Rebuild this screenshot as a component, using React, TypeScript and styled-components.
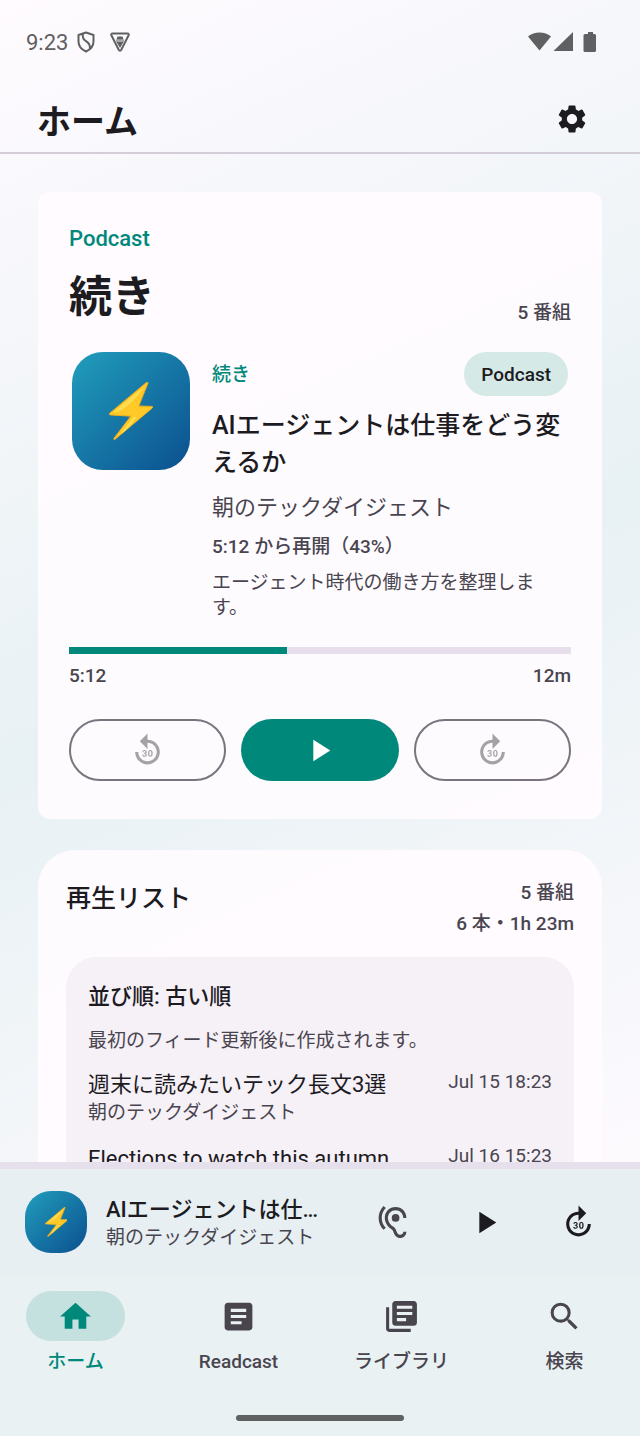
import React from "react";
import styled, { createGlobalStyle, css } from "styled-components";
import {
  MdArticle,
  MdForward30,
  MdHearing,
  MdHome,
  MdLibraryBooks,
  MdPlayArrow,
  MdReplay30,
  MdSearch,
  MdSettings,
} from "react-icons/md";

const color = {
  ink: "#1c1b1f",
  muted: "#49454f",
  system: "#5f6061",
  primary: "#00897b",
  outline: "#79747e",
  track: "#e7e0ec",
  surface: "rgba(255, 251, 255, 0.94)",
  inset: "#f6f0f7",
};

const GlobalStyle = createGlobalStyle`
  *, *::before, *::after { box-sizing: border-box; }
  body {
    margin: 0;
    color: ${color.ink};
    font-family: Roboto, "Noto Sans CJK JP", sans-serif;
  }
  h1, h2, h3, p, ul { margin: 0; padding: 0; }
  ul { list-style: none; }
  button { font: inherit; color: inherit; cursor: pointer; }
`;

/* Type scale */
const labelText = css`
  font-size: 19px;
  line-height: 25px;
  font-weight: 500;
`;
const smallText = css`
  font-size: 19px;
  line-height: 25px;
  font-weight: 400;
`;
const mediumText = css`
  font-size: 22px;
  line-height: 31px;
`;
const titleText = css`
  font-size: 25px;
  line-height: 37px;
  font-weight: 500;
`;

const Screen = styled.div`
  display: flex;
  flex-direction: column;
  height: 100vh;
  background: linear-gradient(156deg, #fffbff 0%, #e8f1f4 45%, #fffbff 88%);
`;

const StatusBar = styled.div`
  flex: none;
  display: flex;
  align-items: center;
  justify-content: space-between;
  height: 84px;
  padding: 0 43px 0 26px;
  color: ${color.system};
  font-size: 22px;
`;

const StatusGroup = styled.div<{ $gap: number }>`
  display: flex;
  align-items: center;
  gap: ${(p) => p.$gap}px;
`;

const AppBar = styled.header`
  flex: none;
  display: flex;
  align-items: center;
  justify-content: space-between;
  height: 70px;
  padding: 2px 31px 0 37px;
  border-bottom: 2px solid #d2cdd7;
`;

const PageTitle = styled.h1`
  padding-top: 5px;
  font-size: 34px;
  line-height: 44px;
  font-weight: 700;
`;

const IconButton = styled.button<{ $size: number; $tone?: string }>`
  display: grid;
  place-items: center;
  flex: none;
  width: ${(p) => p.$size}px;
  height: ${(p) => p.$size}px;
  padding: 0;
  border: 0;
  border-radius: 50%;
  background: none;
  color: ${(p) => p.$tone ?? color.ink};
`;

const Feed = styled.main`
  flex: 1;
  min-height: 0;
  display: flex;
  flex-direction: column;
  gap: 31px;
  padding: 38px;
  overflow-y: auto;
  scrollbar-width: none;
`;

const ResumeCard = styled.section`
  flex: none;
  padding: 31px 31px 38px;
  border-radius: 12px;
  background: ${color.surface};
`;

const Eyebrow = styled.p`
  ${mediumText}
  font-weight: 500;
  color: ${color.primary};
`;

const HeadlineRow = styled.div`
  display: flex;
  align-items: flex-end;
  justify-content: space-between;
  margin-top: 15px;
`;

const Headline = styled.h2`
  font-size: 43px;
  line-height: 56px;
  font-weight: 700;
`;

const Label = styled.p<{ $tone?: string }>`
  ${labelText}
  color: ${(p) => p.$tone ?? color.muted};
`;

const Small = styled.p`
  ${smallText}
  color: ${color.muted};
`;

const Episode = styled.article`
  display: flex;
  align-items: flex-start;
  gap: 22px;
  margin-top: 24px;
  padding: 3px;
`;

const EpisodeText = styled.div`
  flex: 1;
  min-width: 0;
  display: flex;
  flex-direction: column;
  gap: 11px;
`;

const EpisodeTop = styled.div`
  display: flex;
  align-items: center;
  justify-content: space-between;
`;

const Chip = styled.span`
  ${labelText}
  display: flex;
  align-items: center;
  height: 44px;
  padding: 0 17px;
  border-radius: 22px;
  background: #d5e9e7;
`;

const EpisodeTitle = styled.h3`
  ${titleText}
`;

const Show = styled.p`
  ${mediumText}
  color: ${color.muted};
`;

const Cover = styled.div<{ $size: number; $radius: number }>`
  display: grid;
  place-items: center;
  flex: none;
  width: ${(p) => p.$size}px;
  height: ${(p) => p.$size}px;
  border-radius: ${(p) => p.$radius}px;
  background: linear-gradient(135deg, #219ebc 0%, #0b4f8f 100%);
`;

const Track = styled.div`
  height: 7px;
  margin-top: 24px;
  background: ${color.track};
`;

const TrackFill = styled.div`
  height: 100%;
  background: ${color.primary};
`;

const Times = styled.div`
  display: flex;
  justify-content: space-between;
  margin-top: 9px;
`;

const Controls = styled.div`
  display: grid;
  grid-template-columns: repeat(3, 1fr);
  gap: 15px;
  margin-top: 31px;
`;

const ControlButton = styled.button<{ $filled?: boolean }>`
  display: grid;
  place-items: center;
  height: 62px;
  padding: 0;
  border-radius: 31px;
  border: ${(p) => (p.$filled ? "0" : `2px solid ${color.outline}`)};
  background: ${(p) => (p.$filled ? color.primary : "transparent")};
  color: ${(p) => (p.$filled ? "#ffffff" : "#a4a2a6")};
`;

const PlaylistCard = styled.section`
  flex: none;
  padding: 30px 28px 28px;
  border-radius: 37px;
  background: ${color.surface};
`;

const PlaylistHead = styled.div`
  display: flex;
  align-items: flex-start;
  justify-content: space-between;
`;

const PlaylistTitle = styled.h2`
  ${titleText}
`;

const Totals = styled.div`
  display: flex;
  flex-direction: column;
  align-items: flex-end;
  gap: 6px;
`;

const Queue = styled.div`
  display: flex;
  flex-direction: column;
  gap: 16px;
  margin-top: 21px;
  padding: 24px 22px 22px;
  border-radius: 31px;
  background: ${color.inset};
`;

const QueueOrder = styled.h3`
  ${mediumText}
  font-weight: 500;
`;

const QueueList = styled.ul`
  display: flex;
  flex-direction: column;
  gap: 18px;
`;

const QueueItem = styled.li`
  display: flex;
  align-items: flex-start;
  justify-content: space-between;
  gap: 12px;
`;

const QueueTitle = styled.p`
  ${mediumText}
`;

const BottomBar = styled.footer`
  flex: none;
`;

const MiniTrack = styled.div`
  height: 7px;
  background: #e6dfec;
`;

const MiniPlayer = styled.section`
  display: flex;
  align-items: center;
  gap: 19px;
  padding: 16px 25px;
  background: #e7eff2;
`;

const MiniText = styled.div`
  flex: 1;
  min-width: 0;
`;

const MiniTitle = styled.p`
  ${mediumText}
  font-weight: 500;
  overflow: hidden;
  white-space: nowrap;
  text-overflow: ellipsis;
`;

const Nav = styled.nav`
  display: grid;
  grid-template-columns: repeat(4, 1fr);
  gap: 12px;
  height: 124px;
  padding-top: 16px;
  background: #e9f1f3;
`;

const NavItem = styled.button<{ $active?: boolean }>`
  ${labelText}
  display: flex;
  flex-direction: column;
  align-items: center;
  justify-content: flex-start;
  gap: 8px;
  padding: 0;
  border: 0;
  background: none;
  color: ${(p) => (p.$active ? color.primary : color.muted)};
`;

const NavPill = styled.span<{ $active?: boolean }>`
  display: grid;
  place-items: center;
  width: 99px;
  height: 50px;
  border-radius: 25px;
  background: ${(p) => (p.$active ? "#c5e1df" : "transparent")};
`;

const GestureArea = styled.div`
  display: grid;
  place-items: center;
  height: 37px;
  background: #e9f1f3;
`;

const GestureHandle = styled.div`
  width: 168px;
  height: 6px;
  border-radius: 3px;
  background: #5f6163;
`;

function ShieldIcon() {
  return (
    <svg width="18" height="22" viewBox="0 0 18 22" fill="none" stroke="currentColor" strokeWidth="2" strokeLinejoin="round" aria-hidden="true">
      <path d="M9 1.500 16.500 4v6.500c0 4.500-3 8-7.500 10-4.500-2-7.500-5.500-7.500-10V4Z" />
      <path d="M5.800 2.800c-.5 3.400.2 5.400 3.200 7.400 3.400 2.200 4.600 4 3.800 7.800" />
    </svg>
  );
}

function TriangleIcon() {
  return (
    <svg width="20" height="20" viewBox="0 0 20 20" fill="none" aria-hidden="true">
      <path d="M2.600 1.500h14.800c1.200 0 1.700 1 1.100 2l-7.200 14.300c-.6 1.100-2 1.100-2.600 0L1.500 3.500c-.6-1-.1-2 1.100-2Z" stroke="currentColor" strokeWidth="2" />
      <path d="M7.500 4.500h5l1 3h-7Z" fill="currentColor" />
      <path d="M6 7.500h8v2.500H6Z" fill="currentColor" opacity=".55" />
      <path d="M6.500 10h7l-3.500 6Z" fill="currentColor" />
    </svg>
  );
}

function SignalIcons() {
  return (
    <svg width="69" height="22" viewBox="0 0 69 22" fill="currentColor" aria-label="Wi-Fi, mobile signal, battery" role="img">
      <path d="M0 5.500C6.200 0 17 0 23 5.500L11.500 19.500Z" />
      <path d="M45 1v19H25.500Z" />
      <path d="M60 1h5v2h1.500A1.500 1.500 0 0 1 68 4.500v15a1.500 1.500 0 0 1-1.500 1.500h-9.500a1.500 1.500 0 0 1-1.500-1.500v-15A1.500 1.500 0 0 1 57 3h3Z" />
    </svg>
  );
}

function Bolt({ height }: { height: number }) {
  return (
    <svg width={(height * 44) / 58} height={height} viewBox="0 0 44 58" aria-hidden="true">
      <path
        d="M37.500.4.700 31.300c-.8.700-.5 1.500.5 1.600l20.600 1.300L5 56.300c-.6 1 .2 1.600 1.100.9L43.300 26c.8-.7.5-1.600-.5-1.600l-13-.4L38.900 1.300c.4-.9-.6-1.500-1.400-.9Z"
        fill="#ffc928"
        stroke="#f2ab1b"
        strokeWidth="1"
        strokeLinejoin="round"
      />
      <path d="M35 4.500 5 29.600c-.9.800 0 1.500 1 1.100C16 27.500 25 20 35 4.500Z" fill="#ffdc4e" />
      <path d="M24.500 35.500 11 52.500c4-2 10-8 15.500-16.500.8-1.400-1-1.800-2-.5Z" fill="#ffe05a" />
    </svg>
  );
}

const queue = [
  { title: "週末に読みたいテック長文3選", show: "朝のテックダイジェスト", date: "Jul 15 18:23" },
  { title: "Elections to watch this autumn", show: "", date: "Jul 16 15:23" },
];

const tabs = [
  { label: "ホーム", Icon: MdHome },
  { label: "Readcast", Icon: MdArticle },
  { label: "ライブラリ", Icon: MdLibraryBooks },
  { label: "検索", Icon: MdSearch },
];

const playback = { position: 312, duration: 720 };

export default function App() {
  const progress = (playback.position / playback.duration) * 100;
  return (
    <>
      <GlobalStyle />
      <Screen lang="ja">
        <StatusBar>
          <StatusGroup $gap={9}>
            <span>9:23</span>
            <StatusGroup $gap={15}>
              <ShieldIcon />
              <TriangleIcon />
            </StatusGroup>
          </StatusGroup>
          <SignalIcons />
        </StatusBar>

        <AppBar>
          <PageTitle>ホーム</PageTitle>
          <IconButton $size={75} aria-label="設定">
            <MdSettings size={34} />
          </IconButton>
        </AppBar>

        <Feed>
          <ResumeCard>
            <Eyebrow>Podcast</Eyebrow>
            <HeadlineRow>
              <Headline>続き</Headline>
              <Label>5 番組</Label>
            </HeadlineRow>

            <Episode>
              <Cover $size={118} $radius={31}>
                <Bolt height={58} />
              </Cover>
              <EpisodeText>
                <EpisodeTop>
                  <Label $tone={color.primary}>続き</Label>
                  <Chip>Podcast</Chip>
                </EpisodeTop>
                <EpisodeTitle>AIエージェントは仕事をどう変えるか</EpisodeTitle>
                <Show>朝のテックダイジェスト</Show>
                <Label>5:12 から再開（43%）</Label>
                <Small>エージェント時代の働き方を整理します。</Small>
              </EpisodeText>
            </Episode>

            <Track
              role="progressbar"
              aria-label="再生位置"
              aria-valuenow={Math.round(progress)}
              aria-valuemin={0}
              aria-valuemax={100}
            >
              <TrackFill style={{ width: `${progress}%` }} />
            </Track>
            <Times>
              <Label>5:12</Label>
              <Label>12m</Label>
            </Times>

            <Controls>
              <ControlButton aria-label="30秒戻る">
                <MdReplay30 size={37} />
              </ControlButton>
              <ControlButton $filled aria-label="再生">
                <MdPlayArrow size={37} />
              </ControlButton>
              <ControlButton aria-label="30秒進む">
                <MdForward30 size={37} />
              </ControlButton>
            </Controls>
          </ResumeCard>

          <PlaylistCard>
            <PlaylistHead>
              <PlaylistTitle>再生リスト</PlaylistTitle>
              <Totals>
                <Label>5 番組</Label>
                <Label>6 本・1h 23m</Label>
              </Totals>
            </PlaylistHead>
            <Queue>
              <QueueOrder>並び順: 古い順</QueueOrder>
              <Small>最初のフィード更新後に作成されます。</Small>
              <QueueList>
                {queue.map((item) => (
                  <QueueItem key={item.title}>
                    <div>
                      <QueueTitle>{item.title}</QueueTitle>
                      {item.show && <Small>{item.show}</Small>}
                    </div>
                    <Small as="time">{item.date}</Small>
                  </QueueItem>
                ))}
              </QueueList>
            </Queue>
          </PlaylistCard>
        </Feed>

        <BottomBar>
          <MiniTrack />
          <MiniPlayer>
            <Cover $size={62} $radius={26}>
              <Bolt height={30} />
            </Cover>
            <MiniText>
              <MiniTitle>AIエージェントは仕事をどう変えるか</MiniTitle>
              <Small>朝のテックダイジェスト</Small>
            </MiniText>
            <IconButton $size={74} $tone={color.muted} aria-label="音声強調">
              <MdHearing size={37} />
            </IconButton>
            <IconButton $size={74} aria-label="再生">
              <MdPlayArrow size={37} />
            </IconButton>
            <IconButton $size={74} aria-label="30秒進む">
              <MdForward30 size={37} />
            </IconButton>
          </MiniPlayer>
          <Nav>
            {tabs.map(({ label, Icon }, i) => (
              <NavItem key={label} $active={i === 0} aria-current={i === 0 ? "page" : undefined}>
                <NavPill $active={i === 0}>
                  <Icon size={37} />
                </NavPill>
                {label}
              </NavItem>
            ))}
          </Nav>
          <GestureArea>
            <GestureHandle />
          </GestureArea>
        </BottomBar>
      </Screen>
    </>
  );
}
